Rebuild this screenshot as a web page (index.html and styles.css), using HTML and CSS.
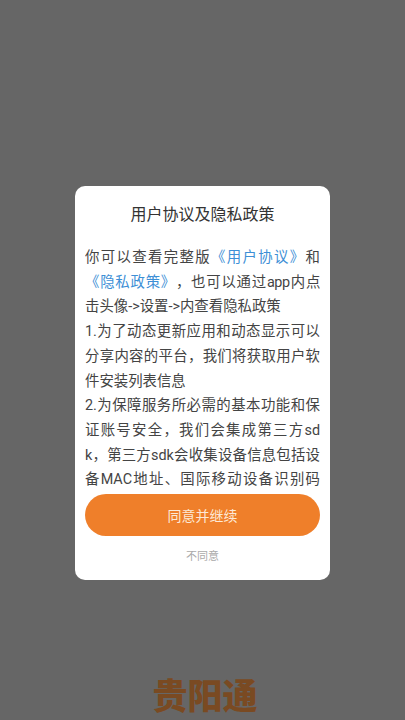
FILE: index.html
```html
<!DOCTYPE html>
<html>
  <head>
    <title>用户协议及隐私政策</title>
    <link rel="stylesheet" href="styles.css">
  </head>
  <body>
    <div class="screen">
      <div class="dialog">
        <p class="title">用户协议及隐私政策</p>
        <div class="content">
          <span class="line">你可以查看完整版<span class="link">《用户协议》</span>和</span>
          <span class="line tight"><span class="link">《隐私政策》</span>，也可以通过app内点</span>
          <span class="line short">击头像-&gt;设置-&gt;内查看隐私政策</span>
          <span class="line">1.为了动态更新应用和动态显示可以</span>
          <span class="line">分享内容的平台，我们将获取用户软</span>
          <span class="line short">件安装列表信息</span>
          <span class="line">2.为保障服务所必需的基本功能和保</span>
          <span class="line">证账号安全，我们会集成第三方sd</span>
          <span class="line">k，第三方sdk会收集设备信息包括设</span>
          <span class="line">备MAC地址、国际移动设备识别码</span>
        </div>
        <button class="agree">同意并继续</button>
        <button class="disagree">不同意</button>
      </div>
      <div class="logo">贵阳通</div>
    </div>
  </body>
</html>
```

FILE: styles.css
```css
body {
  margin: 0;
  background-color: #666666;
  font-family: Roboto, "Noto Sans CJK SC", sans-serif;
}
.screen {
  height: 720px;
  overflow: hidden;
  display: flex;
  flex-direction: column;
  align-items: center;
  padding-top: 186px;
  box-sizing: border-box;
}
.dialog {
  width: 255px;
  height: 395px;
  background-color: white;
  border-radius: 10px;
  padding: 0 10px;
  box-sizing: border-box;
  display: flex;
  flex-direction: column;
}
.title {
  margin: 17px 0 0;
  font-size: 16px;
  line-height: 23px;
  color: #333333;
  text-align: center;
}
.content {
  margin-top: 20px;
  height: 247px;
  overflow: hidden;
  font-size: 14.4px;
  line-height: 24.7px;
  color: #444444;
  text-spacing-trim: space-all;
}
.line {
  display: block;
  text-align: justify;
  text-align-last: justify;
}
.short {
  text-align-last: left;
}
.tight {
  letter-spacing: -0.4px;
}
.link {
  color: #3d8fd6;
}
.agree {
  margin-top: 1px;
  height: 42px;
  flex-shrink: 0;
  border: none;
  border-radius: 21px;
  background-color: #ef7f2a;
  color: #fde9d6;
  font-family: inherit;
  font-size: 14px;
}
.disagree {
  margin-top: 12px;
  padding: 0;
  border: none;
  background-color: transparent;
  color: #aaaaaa;
  font-family: inherit;
  font-size: 11px;
  line-height: 18px;
}
.logo {
  margin-top: 96px;
  padding-left: 5px;
  font-size: 35px;
  line-height: 44px;
  font-weight: 900;
  color: #7a4a22;
}
```
